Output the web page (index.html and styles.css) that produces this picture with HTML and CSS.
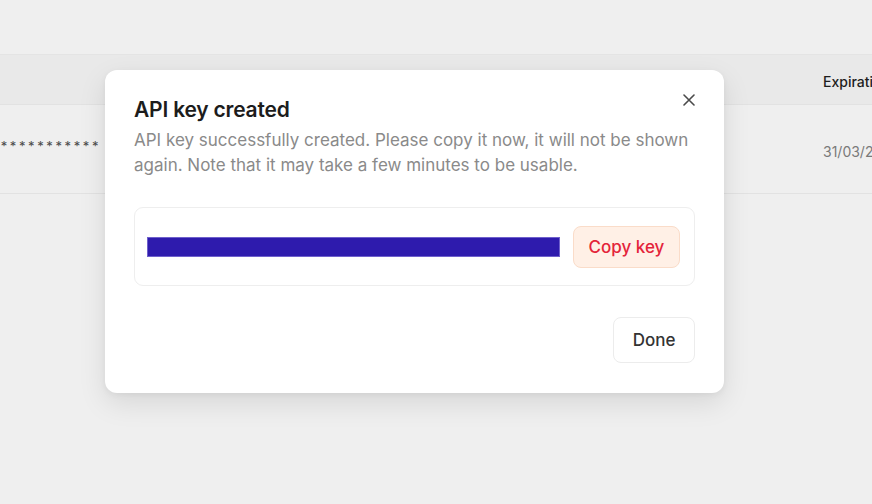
FILE: index.html
```html
<!DOCTYPE html>
<html lang="en">
<head>
<meta charset="utf-8">
<title>API key created</title>
<link rel="stylesheet" href="styles.css">
</head>
<body>
<div class="page">
  <div class="topbar"></div>
  <div class="table">
    <div class="row head">
      <div class="cell first"></div>
      <div class="cell spacer"></div>
      <div class="cell last">Expiration</div>
    </div>
    <div class="row body">
      <div class="cell first masked">********************</div>
      <div class="cell spacer"></div>
      <div class="cell last date">31/03/2025</div>
    </div>
  </div>
</div>

<div class="modal" role="dialog" aria-labelledby="mtitle">
  <button class="close" aria-label="Close">
    <svg width="12" height="12" viewBox="0 0 12 12"><path d="M1 1L11 11M11 1L1 11" stroke="#4a4a4a" stroke-width="1.6" stroke-linecap="round"/></svg>
  </button>
  <h2 id="mtitle" class="title">API key created</h2>
  <p class="desc">API key successfully created. Please copy it now, it will not be shown again. Note that it may take a few minutes to be usable.</p>
  <div class="keybox">
    <div class="keybar"></div>
    <button class="copy">Copy key</button>
  </div>
  <div class="actions">
    <button class="done">Done</button>
  </div>
</div>
</body>
</html>
```

FILE: styles.css
```css
* { box-sizing: border-box; }
html, body { margin: 0; padding: 0; }
body {
  background: #efefef;
  font-family: Inter, "Noto Sans", sans-serif;
  width: 872px;
  height: 504px;
  overflow: hidden;
}
.page { width: 872px; }
.topbar { height: 54px; }
.table { border-top: 1px solid #e4e4e4; }
.row { display: flex; align-items: center; }
.row.head { height: 50px; background: #e9e9e9; border-bottom: 1px solid #e2e2e2; }
.row.body { height: 89px; border-bottom: 1px solid #e2e2e2; }
.cell { white-space: nowrap; overflow: hidden; }
.cell.first { width: 101px; display: flex; justify-content: flex-end; }
.cell.spacer { flex: 1; }
.cell.last { width: 49px; font-size: 14px; }
.head .last { color: #1e1e1e; font-weight: 500; padding-top: 4px; }
.masked { color: #4a4a4a; font-size: 13px; letter-spacing: 2.6px; padding-bottom: 6px; }
.date { color: #7a7a7a; padding-top: 4px; }

.modal {
  position: absolute;
  left: 105px;
  top: 70px;
  width: 619px;
  height: 323px;
  background: #fff;
  border-radius: 12px;
  box-shadow: 0 10px 28px rgba(0,0,0,0.10), 0 2px 6px rgba(0,0,0,0.05);
  padding: 26px 30px 30px 29px;
}
.close {
  position: absolute;
  right: 23px;
  top: 18px;
  width: 24px;
  height: 24px;
  border: 0;
  background: transparent;
  padding: 0;
  display: flex;
  align-items: center;
  justify-content: center;
  cursor: pointer;
}
.title {
  margin: 0;
  font-size: 21px;
  line-height: 28px;
  font-weight: 600;
  color: #1c1c1c;
  letter-spacing: -0.2px;
}
.desc {
  margin: 4px 0 0;
  font-size: 17px;
  line-height: 25px;
  color: #8a8a8a;
  width: 561px;
}
.keybox {
  margin-top: 29px;
  width: 561px;
  height: 79px;
  border: 1px solid #eeeeee;
  border-radius: 9px;
  display: flex;
  align-items: center;
  padding: 0 14px 0 12px;
  gap: 13px;
}
.keybar {
  flex: 1;
  height: 20px;
  background: #2e1bad;
  border: 1px solid #6f60cc;
  margin-top: 1px;
}
.copy {
  width: 107px;
  height: 42px;
  border-radius: 8px;
  background: #fff0e6;
  border: 1px solid #fadcc9;
  color: #e4243a;
  font-family: Inter, "Noto Sans", sans-serif;
  font-size: 17px;
  font-weight: 500;
  padding: 0;
}
.actions {
  margin-top: 31px;
  width: 561px;
  display: flex;
  justify-content: flex-end;
}
.done {
  width: 82px;
  height: 46px;
  border-radius: 8px;
  background: #fff;
  border: 1px solid #ececec;
  color: #333;
  font-family: Inter, "Noto Sans", sans-serif;
  font-size: 17px;
  font-weight: 500;
  padding: 0;
}
```
